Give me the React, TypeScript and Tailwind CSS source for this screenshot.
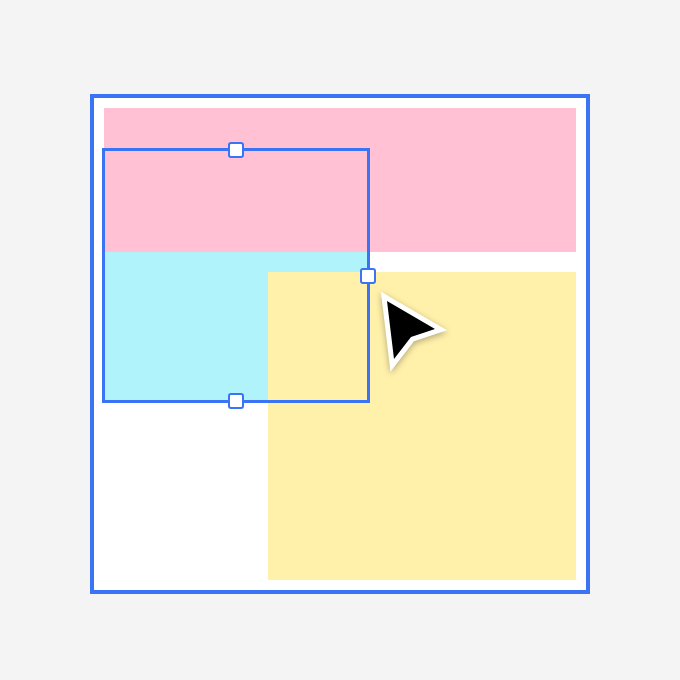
export default function App() {
  return (
    <div className="flex h-[680px] w-[680px] justify-center bg-[#f4f4f4] pt-[94px]">
      <div className="relative h-[500px] w-[500px] border-4 border-[#3a74f5] bg-white">
        {/* bottom layer: cyan block, partly hidden behind pink */}
        <div className="absolute left-[10px] top-[52px] h-[252px] w-[264px] bg-[#b1f3fb]" />
        <div className="absolute left-[10px] top-[10px] h-[144px] w-[472px] bg-[#ffc1d3]" />
        <div className="absolute left-[174px] top-[174px] h-[308px] w-[308px] bg-[#fff0aa]" />

        {/* selection box */}
        <div className="absolute left-[8px] top-[50px] h-[255px] w-[268px] border-[3px] border-[#3a74f5]" />
        <div className="absolute left-[134px] top-[44px] h-[16px] w-[16px] rounded-[3px] border-2 border-[#3a74f5] bg-white" />
        <div className="absolute left-[266px] top-[170px] h-[16px] w-[16px] rounded-[3px] border-2 border-[#3a74f5] bg-white" />
        <div className="absolute left-[134px] top-[295px] h-[16px] w-[16px] rounded-[3px] border-2 border-[#3a74f5] bg-white" />

        {/* cursor */}
        <svg
          className="absolute left-[276px] top-[182px] drop-shadow-[0_2px_3px_rgba(0,0,0,0.3)]"
          width="100"
          height="110"
          viewBox="0 0 100 110"
        >
          <polygon
            points="17,21 65,49 41,57 24,79"
            fill="#000"
            stroke="#fff"
            strokeWidth="10"
            strokeLinejoin="miter"
            strokeMiterlimit="10"
            paintOrder="stroke"
          />
        </svg>
      </div>
    </div>
  );
}
